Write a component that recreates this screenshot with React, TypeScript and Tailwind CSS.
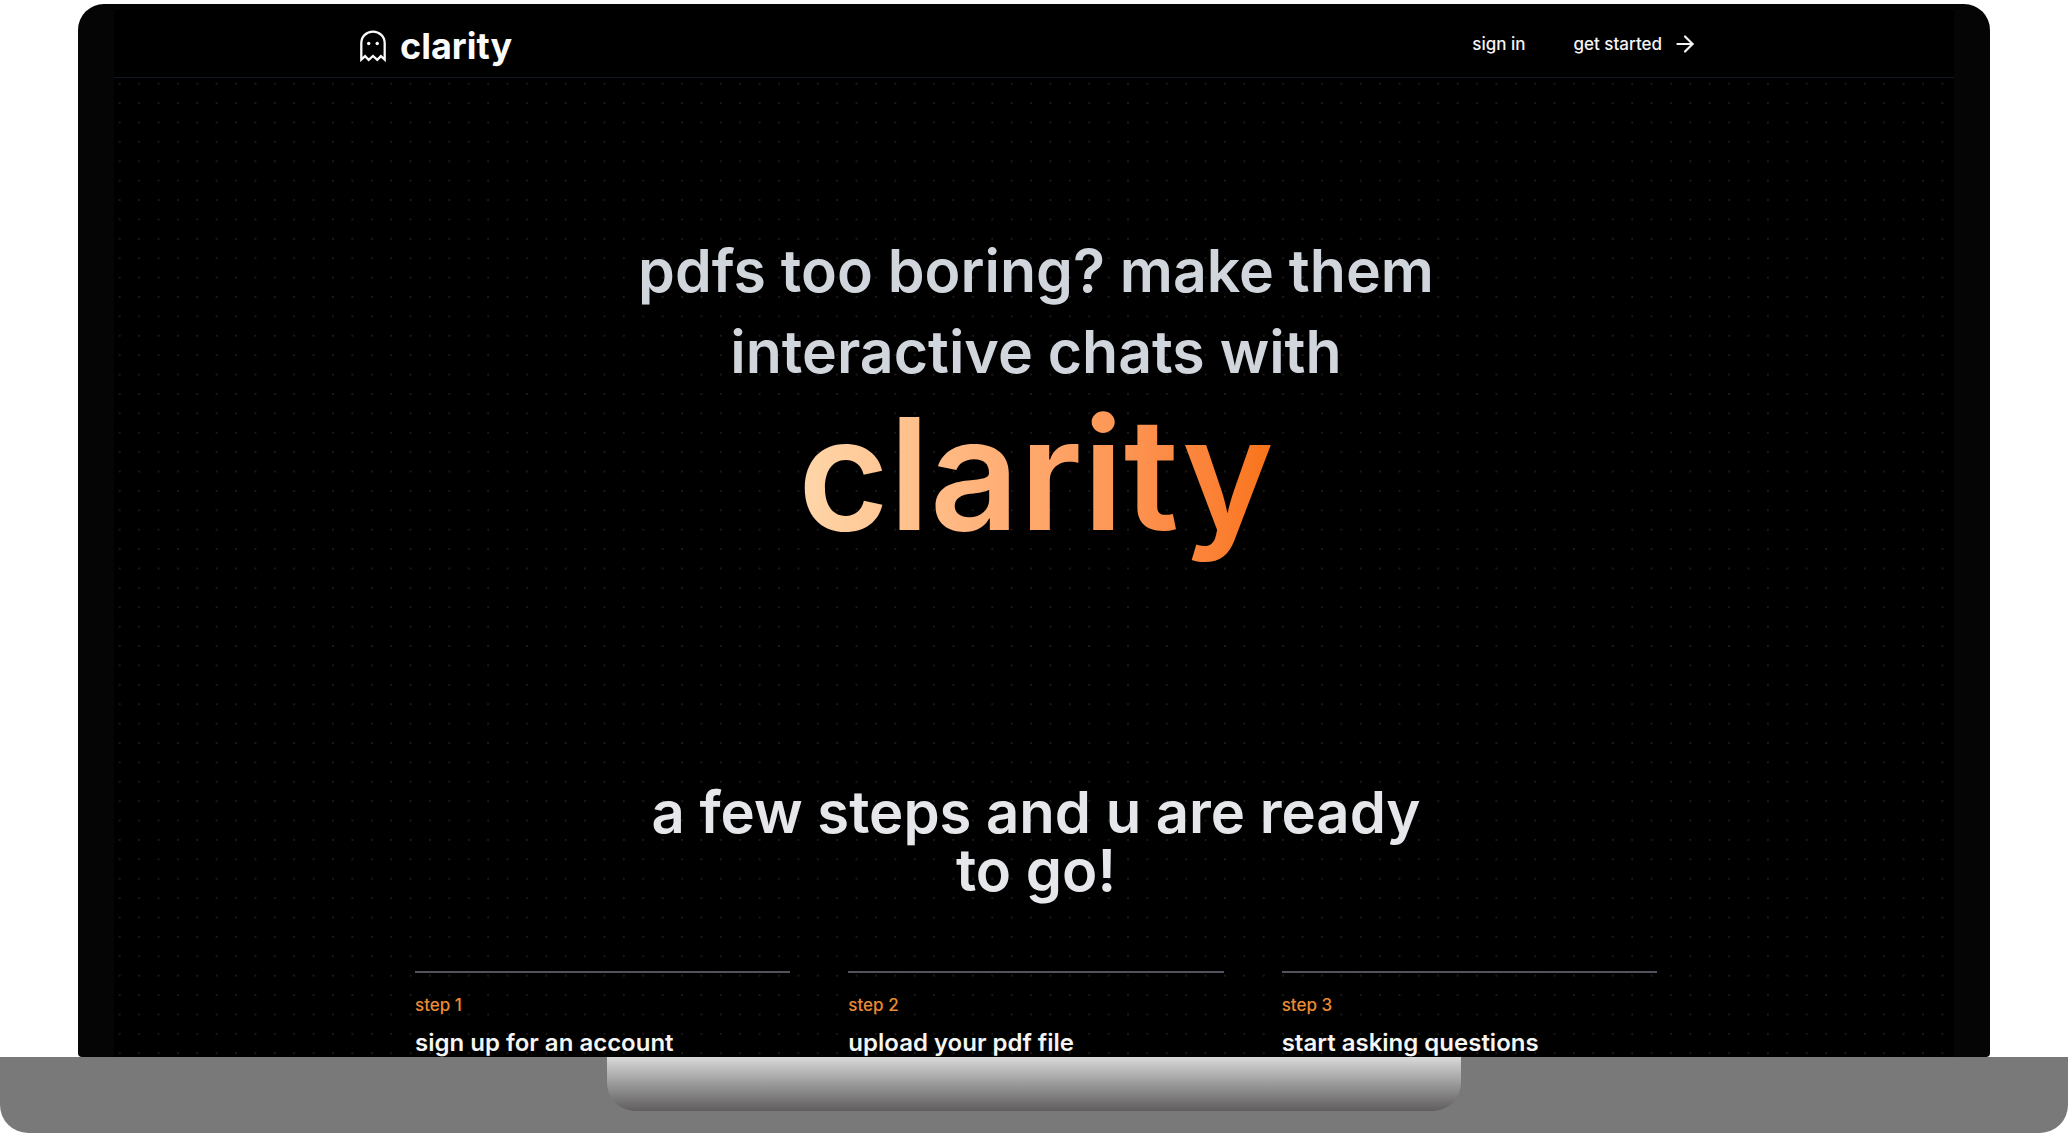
import { ArrowRight } from "lucide-react";

const steps = [
  { label: "step 1", title: "sign up for an account" },
  { label: "step 2", title: "upload your pdf file" },
  { label: "step 3", title: "start asking questions" },
];

function GhostIcon() {
  return (
    <svg
      viewBox="0 0 26 32"
      className="h-8 w-[26px]"
      fill="none"
      stroke="currentColor"
      strokeWidth="2.3"
      strokeLinejoin="miter"
      aria-hidden="true"
    >
      <path d="M1.3 29.6V13C1.3 6.4 6.5 1.6 13 1.6S24.7 6.4 24.7 13V29.6L20.9 26.2 17.3 29.8 13 26 8.7 29.8 5.1 26.2Z" />
      <circle cx="8.7" cy="13.5" r="1.7" fill="currentColor" stroke="none" />
      <circle cx="17.2" cy="13.5" r="1.7" fill="currentColor" stroke="none" />
    </svg>
  );
}

function Header() {
  return (
    <header className="shrink-0 border-b border-[#0f1820] bg-black">
      <div className="mx-auto flex h-[67px] max-w-[1348px] items-center justify-between">
        <a href="#" className="flex items-center gap-3.5 pt-1 text-neutral-50">
          <GhostIcon />
          <span className="text-[36px] leading-10 font-bold">clarity</span>
        </a>
        <nav className="flex items-center gap-12 pr-2.5 text-[17px] leading-6 font-medium text-neutral-100">
          <a href="#sign-in">sign in</a>
          <a href="#get-started" className="flex items-center gap-2.5">
            get started
            <ArrowRight size={26} strokeWidth={2} aria-hidden="true" />
          </a>
        </nav>
      </div>
    </header>
  );
}

function Hero() {
  return (
    <section className="mx-auto max-w-[900px] pt-[152px] text-center">
      <h1 className="font-semibold text-gray-300">
        <span className="block text-[59px] leading-[81px]">
          pdfs too boring? make them
          <br />
          interactive chats with
        </span>
        <span className="-mt-4 inline-block bg-linear-to-r from-[#fed7aa] to-[#f97316] bg-clip-text text-[156px] leading-[196px] text-transparent">
          clarity
        </span>
      </h1>
    </section>
  );
}

function Steps() {
  return (
    <section className="mx-auto max-w-[1242px] pt-[211px]">
      <h2 className="mx-auto max-w-[850px] text-center text-[58px] leading-[58px] font-semibold text-gray-200">
        a few steps and u are ready
        <br />
        to go!
      </h2>
      <ol className="mt-[72px] grid grid-cols-3 gap-[58px]">
        {steps.map((step) => (
          <li key={step.label} className="border-t-2 border-zinc-600 pt-5">
            <p className="text-[17px] leading-6 font-medium text-[#ea8a35]">{step.label}</p>
            <h3 className="mt-2.5 text-[24px] leading-8 font-semibold text-neutral-100">{step.title}</h3>
          </li>
        ))}
      </ol>
    </section>
  );
}

export default function App() {
  return (
    <div className="flex h-screen flex-col overflow-hidden bg-white pt-1 font-['Inter',sans-serif]">
      <div className="mx-[78px] flex min-h-0 flex-1 overflow-hidden rounded-t-[26px] rounded-b-sm bg-[#050505] px-9 pt-1.5">
        <div className="flex min-w-0 flex-1 flex-col overflow-hidden bg-black">
          <Header />
          <main className="min-h-0 flex-1 overflow-hidden bg-[radial-gradient(#1a1a1a_1px,transparent_1px)] bg-[size:19.4px_19.4px] bg-[position:-4px_-4px] pl-1">
            <Hero />
            <Steps />
          </main>
        </div>
      </div>
      <div className="h-[76px] shrink-0 rounded-b-[28px] bg-[#797979]">
        <div className="mx-auto h-[54px] w-[41.3%] rounded-b-[28px] bg-linear-to-b from-[#dadada] to-[#605e5e]" />
      </div>
    </div>
  );
}
